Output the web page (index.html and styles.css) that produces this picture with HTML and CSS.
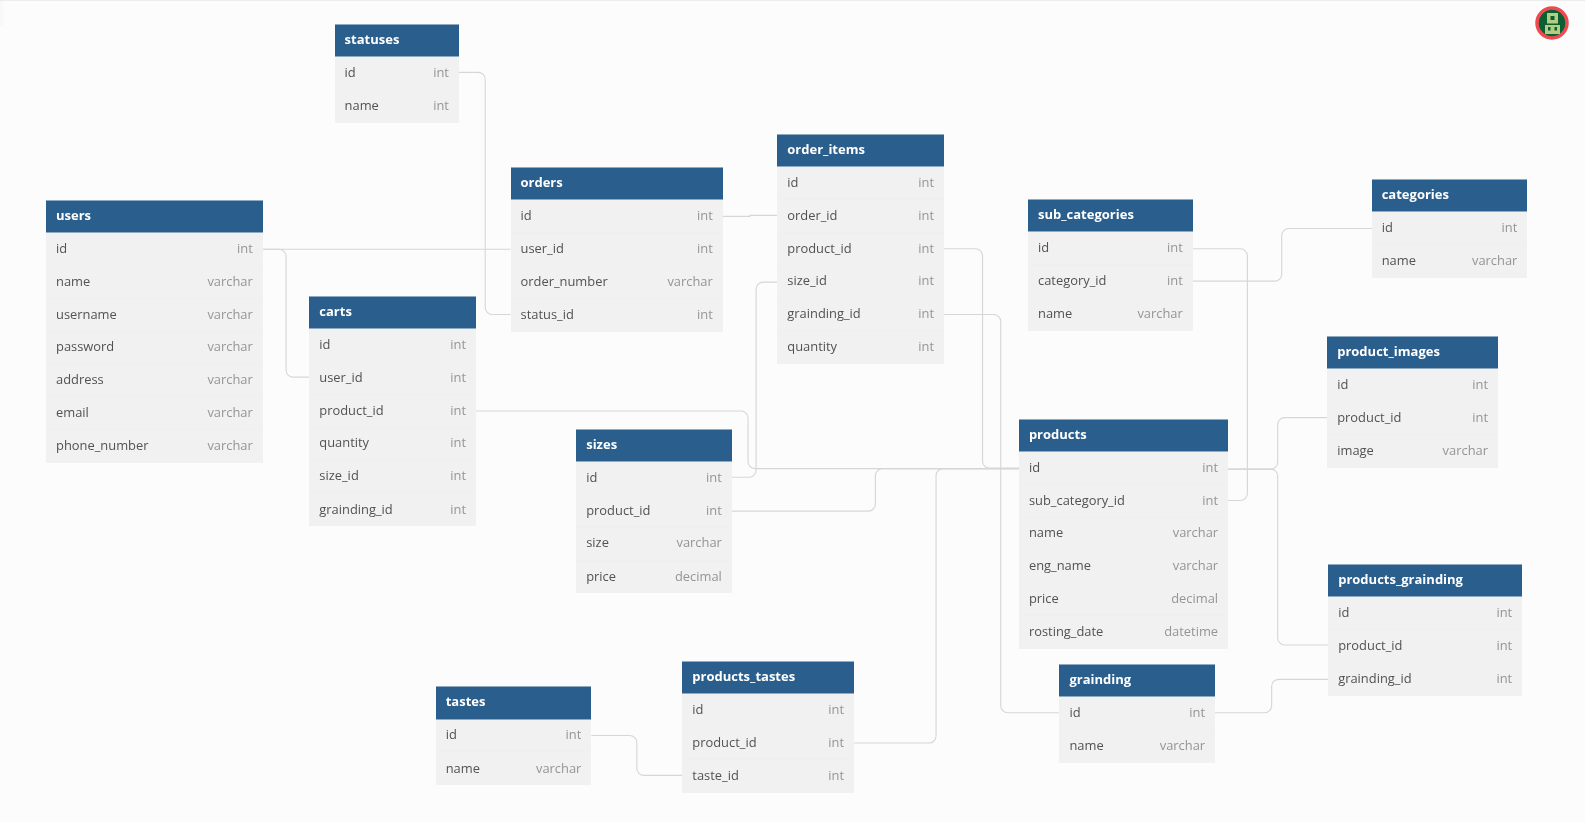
FILE: index.html
```html
<!DOCTYPE html>
<html lang="en">
<head>
<meta charset="utf-8">
<title>ERD</title>
<link rel="stylesheet" href="styles.css">
</head>
<body>
<div class="edge-tab"></div>
<div class="canvas">
  <svg class="links" viewBox="0 0 1568 813" width="1585" height="822" fill="none">
    <path d="M454 71.500H473a7 7 0 0 1 7 7V304a7 7 0 0 0 7 7H505"/>
    <path d="M260 246.500H505"/>
    <path d="M260 246.500H276a7 7 0 0 1 7 7V366a7 7 0 0 0 7 7H306"/>
    <path d="M715 214H742V213H769"/>
    <path d="M934 246H965a7 7 0 0 1 7 7V456a7 7 0 0 0 7 7H1008"/>
    <path d="M934 311H983a7 7 0 0 1 7 7V698a7 7 0 0 0 7 7H1048"/>
    <path d="M769 279H755a7 7 0 0 0-7 7V465a7 7 0 0 1-7 7H724"/>
    <path d="M471 406.500H733a7 7 0 0 1 7 7V456a7 7 0 0 0 7 7.500H1008"/>
    <path d="M724 505.500H859a7 7 0 0 0 7-7V470.500a7 7 0 0 1 7-7H1008"/>
    <path d="M845 735H919a7 7 0 0 0 7-7V470.500a7 7 0 0 1 7-7H1008"/>
    <path d="M585 727.500H623a7 7 0 0 1 7 7V760a7 7 0 0 0 7 7H675"/>
    <path d="M1180 246H1227a7 7 0 0 1 7 7V488a7 7 0 0 1-7 7H1215"/>
    <path d="M1180 278H1261a7 7 0 0 0 7-7V233a7 7 0 0 1 7-7H1357"/>
    <path d="M1215 464H1257a7 7 0 0 0 7-7V420a7 7 0 0 1 7-7H1313"/>
    <path d="M1215 464H1257a7 7 0 0 1 7 7V631a7 7 0 0 0 7 7H1314"/>
    <path d="M1202 705H1251a7 7 0 0 0 7-7V679a7 7 0 0 1 7-7H1314"/>
  </svg>

  <section class="tbl t-statuses"><h2>statuses</h2>
    <div class="row"><span>id</span><em>int</em></div>
    <div class="row"><span>name</span><em>int</em></div>
  </section>

  <section class="tbl t-users"><h2>users</h2>
    <div class="row"><span>id</span><em>int</em></div>
    <div class="row"><span>name</span><em>varchar</em></div>
    <div class="row"><span>username</span><em>varchar</em></div>
    <div class="row"><span>password</span><em>varchar</em></div>
    <div class="row"><span>address</span><em>varchar</em></div>
    <div class="row"><span>email</span><em>varchar</em></div>
    <div class="row"><span>phone_number</span><em>varchar</em></div>
  </section>

  <section class="tbl t-orders"><h2>orders</h2>
    <div class="row"><span>id</span><em>int</em></div>
    <div class="row"><span>user_id</span><em>int</em></div>
    <div class="row"><span>order_number</span><em>varchar</em></div>
    <div class="row"><span>status_id</span><em>int</em></div>
  </section>

  <section class="tbl t-order-items"><h2>order_items</h2>
    <div class="row"><span>id</span><em>int</em></div>
    <div class="row"><span>order_id</span><em>int</em></div>
    <div class="row"><span>product_id</span><em>int</em></div>
    <div class="row"><span>size_id</span><em>int</em></div>
    <div class="row"><span>grainding_id</span><em>int</em></div>
    <div class="row"><span>quantity</span><em>int</em></div>
  </section>

  <section class="tbl t-carts"><h2>carts</h2>
    <div class="row"><span>id</span><em>int</em></div>
    <div class="row"><span>user_id</span><em>int</em></div>
    <div class="row"><span>product_id</span><em>int</em></div>
    <div class="row"><span>quantity</span><em>int</em></div>
    <div class="row"><span>size_id</span><em>int</em></div>
    <div class="row"><span>grainding_id</span><em>int</em></div>
  </section>

  <section class="tbl t-sizes"><h2>sizes</h2>
    <div class="row"><span>id</span><em>int</em></div>
    <div class="row"><span>product_id</span><em>int</em></div>
    <div class="row"><span>size</span><em>varchar</em></div>
    <div class="row"><span>price</span><em>decimal</em></div>
  </section>

  <section class="tbl t-sub-categories"><h2>sub_categories</h2>
    <div class="row"><span>id</span><em>int</em></div>
    <div class="row"><span>category_id</span><em>int</em></div>
    <div class="row"><span>name</span><em>varchar</em></div>
  </section>

  <section class="tbl t-categories"><h2>categories</h2>
    <div class="row"><span>id</span><em>int</em></div>
    <div class="row"><span>name</span><em>varchar</em></div>
  </section>

  <section class="tbl t-product-images"><h2>product_images</h2>
    <div class="row"><span>id</span><em>int</em></div>
    <div class="row"><span>product_id</span><em>int</em></div>
    <div class="row"><span>image</span><em>varchar</em></div>
  </section>

  <section class="tbl t-products"><h2>products</h2>
    <div class="row"><span>id</span><em>int</em></div>
    <div class="row"><span>sub_category_id</span><em>int</em></div>
    <div class="row"><span>name</span><em>varchar</em></div>
    <div class="row"><span>eng_name</span><em>varchar</em></div>
    <div class="row"><span>price</span><em>decimal</em></div>
    <div class="row"><span>rosting_date</span><em>datetime</em></div>
  </section>

  <section class="tbl t-products-grainding"><h2>products_grainding</h2>
    <div class="row"><span>id</span><em>int</em></div>
    <div class="row"><span>product_id</span><em>int</em></div>
    <div class="row"><span>grainding_id</span><em>int</em></div>
  </section>

  <section class="tbl t-grainding"><h2>grainding</h2>
    <div class="row"><span>id</span><em>int</em></div>
    <div class="row"><span>name</span><em>varchar</em></div>
  </section>

  <section class="tbl t-tastes"><h2>tastes</h2>
    <div class="row"><span>id</span><em>int</em></div>
    <div class="row"><span>name</span><em>varchar</em></div>
  </section>

  <section class="tbl t-products-tastes"><h2>products_tastes</h2>
    <div class="row"><span>id</span><em>int</em></div>
    <div class="row"><span>product_id</span><em>int</em></div>
    <div class="row"><span>taste_id</span><em>int</em></div>
  </section>
</div>

<svg class="avatar" viewBox="0 0 34 34" width="34" height="34">
  <circle cx="17" cy="17" r="15" fill="#0b5f33" stroke="#ee4b50" stroke-width="3.500"/>
  <path class="glyph" fill-rule="evenodd" d="M12 7H23V17.500H12ZM15.500 10V14H19.500V10ZM10 19H25V28H10ZM13 21V24.500H15.500V21ZM19.500 21V24.500H22V21Z"/>
</svg>
</body>
</html>
```

FILE: styles.css
```css
* { box-sizing: border-box; }

html, body {
  margin: 0;
  height: 100%;
  overflow: hidden;
  background: #fcfcfc;
}

body {
  position: relative;
  border-top: 1px solid #ececec;
  font-family: "Open Sans", "Liberation Sans", sans-serif;
}

.edge-tab {
  position: absolute;
  top: 0;
  left: 0;
  width: 3px;
  height: 25px;
  background: #f8f8f8;
  border-bottom-right-radius: 3px;
}

.canvas {
  position: absolute;
  top: -1px;
  left: 0;
  width: 1585px;
  height: 822px;
  filter: blur(0.3px);
}

.links {
  position: absolute;
  top: 0;
  left: 0;
}

.links path {
  stroke: #d6d6d6;
  stroke-width: 1.100;
}

.tbl {
  position: absolute;
  background: #f1f1f1;
}

.tbl h2 {
  margin: 0;
  height: 33.200px;
  padding: 0 10px;
  background: #2a5e8c;
  border-top: 1px solid #8fabc4;
  border-bottom: 1px solid #8fabc4;
  color: #fff;
  font-size: 13px;
  font-weight: 700;
  line-height: 28px;
}

.row {
  display: flex;
  justify-content: space-between;
  align-items: center;
  height: 32.800px;
  padding: 0 10px 2.500px;
  font-size: 12.900px;
  color: #525252;
  border-bottom: 1px solid #efefef;
}

.row:last-child {
  border-bottom: 0;
}

.row em {
  font-style: normal;
  color: #959595;
}

.glyph {
  fill: #b4cd80;
}

.t-statuses { left: 334.600px; top: 24.100px; width: 124.300px; }
.t-users { left: 46px; top: 200.200px; width: 216.800px; }
.t-orders { left: 510.500px; top: 167.300px; width: 212.300px; }
.t-order-items { left: 777.300px; top: 134.100px; width: 166.800px; }
.t-carts { left: 309.300px; top: 296.200px; width: 166.800px; }
.t-sizes { left: 576.200px; top: 429px; width: 155.700px; }
.t-sub-categories { left: 1028px; top: 199.100px; width: 164.800px; }
.t-categories { left: 1371.700px; top: 179.300px; width: 155.700px; }
.t-product-images { left: 1327.200px; top: 336px; width: 170.800px; }
.t-products { left: 1018.900px; top: 419px; width: 209.200px; }
.t-products-grainding { left: 1328.200px; top: 564px; width: 194px; }
.t-grainding { left: 1059.400px; top: 664.100px; width: 155.700px; }
.t-tastes { left: 435.700px; top: 686.400px; width: 155.700px; }
.t-products-tastes { left: 682.300px; top: 661px; width: 171.800px; }

.avatar {
  position: absolute;
  top: 4.500px;
  left: 1535.300px;
}
```
